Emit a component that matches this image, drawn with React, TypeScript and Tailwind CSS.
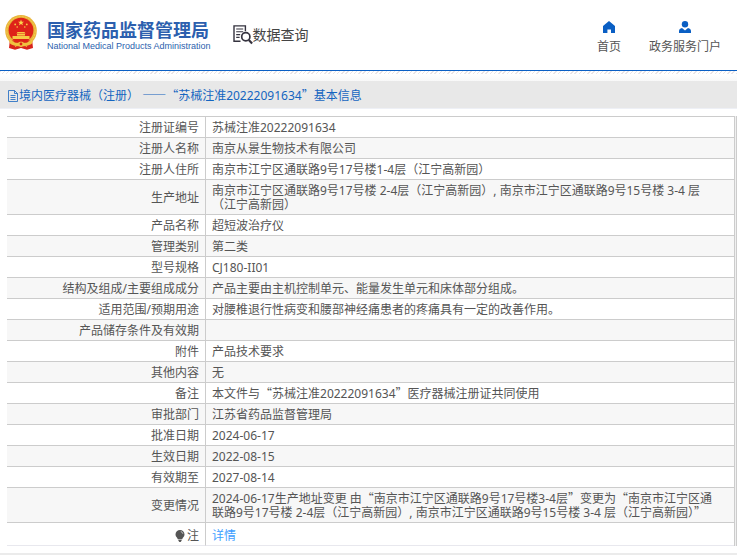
import React from 'react';

type Row = {
  label: string;
  value: string;
};

const rows: Row[] = [
  { label: '注册证编号', value: '苏械注准20222091634' },
  { label: '注册人名称', value: '南京从景生物技术有限公司' },
  { label: '注册人住所', value: '南京市江宁区通联路9号17号楼1-4层（江宁高新园）' },
  {
    label: '生产地址',
    value: '南京市江宁区通联路9号17号楼 2-4层（江宁高新园）, 南京市江宁区通联路9号15号楼 3-4 层（江宁高新园）',
  },
  { label: '产品名称', value: '超短波治疗仪' },
  { label: '管理类别', value: '第二类' },
  { label: '型号规格', value: 'CJ180-II01' },
  { label: '结构及组成/主要组成成分', value: '产品主要由主机控制单元、能量发生单元和床体部分组成。' },
  { label: '适用范围/预期用途', value: '对腰椎退行性病变和腰部神经痛患者的疼痛具有一定的改善作用。' },
  { label: '产品储存条件及有效期', value: '' },
  { label: '附件', value: '产品技术要求' },
  { label: '其他内容', value: '无' },
  { label: '备注', value: '本文件与“苏械注准20222091634”医疗器械注册证共同使用' },
  { label: '审批部门', value: '江苏省药品监督管理局' },
  { label: '批准日期', value: '2024-06-17' },
  { label: '生效日期', value: '2022-08-15' },
  { label: '有效期至', value: '2027-08-14' },
  {
    label: '变更情况',
    value:
      '2024-06-17生产地址变更 由“南京市江宁区通联路9号17号楼3-4层”变更为“南京市江宁区通联路9号17号楼 2-4层（江宁高新园）, 南京市江宁区通联路9号15号楼 3-4 层（江宁高新园）”',
  },
];

// Chinese quotes and dashes need the CJK face to be full width
function CnText({ text }: { text: string }) {
  return (
    <>
      {text.split(/([“”—]+)/).map((part, i) =>
        /[“”—]/.test(part) ? (
          <span key={i} lang="zh-CN" className="font-['Noto_Sans_CJK_SC',sans-serif] leading-none">
            {part}
          </span>
        ) : (
          part
        )
      )}
    </>
  );
}

function Emblem() {
  return (
    <svg viewBox="0 0 32 35" className="h-[35px] w-8 shrink-0" aria-hidden="true">
      <path d="M5 24 L4 33 L10 34.8 L16 33 L22 34.8 L28 33 L27 24 Z" fill="#d8231c" />
      <circle cx="16" cy="15.8" r="15.8" fill="#e9b53a" />
      <circle cx="16" cy="15.8" r="14.2" fill="none" stroke="#f4cd58" strokeWidth="1" strokeDasharray="2 1.2" />
      <circle cx="16" cy="15.2" r="12.4" fill="#de2219" />
      <path d="M16 4.6l.8 2.1h2.2l-1.7 1.4.6 2.2-1.9-1.3-1.9 1.3.6-2.2-1.7-1.4h2.2z" fill="#fbd84b" />
      <g fill="#f6cb45">
        <circle cx="10.2" cy="9.4" r="0.9" />
        <circle cx="21.8" cy="9.4" r="0.9" />
        <circle cx="12.2" cy="12" r="0.8" />
        <circle cx="19.8" cy="12" r="0.8" />
        <path d="M12.5 17h7l1 1.5h-9z" />
        <path d="M12 19h8v1.6h-8z" />
        <path d="M7.5 21h17v3h-17z" />
      </g>
      <path d="M7 25.3h18l-3 2.4H10z" fill="#de2219" />
      <path
        d="M4 24.5c3 3 6 3.8 9 3.4 1-1.6 5-1.6 6 0 3 .4 6-.4 9-3.4l-1 4c-3 2.4-6 2.4-8 1.6-1 1.8-5 1.8-6 0-2 .8-5 .8-8-1.6z"
        fill="#f0c23f"
      />
      <path d="M10 31.5l3-1.5 3 1.6 3-1.6 3 1.5" fill="none" stroke="#f0c23f" strokeWidth="1" />
      <circle cx="16" cy="29" r="1.4" fill="#de2219" />
    </svg>
  );
}

function SearchDocIcon() {
  return (
    <svg viewBox="0 0 20 20" className="h-5 w-5 shrink-0" fill="none" stroke="#35333f" aria-hidden="true">
      <path d="M7.5 16.3H1V.9h11.4v5.4" strokeWidth="1.4" />
      <path d="M3.2 4h7M3.2 6.8h7M3.2 9.6h4M3.2 12.4h3.4" strokeWidth="1.1" />
      <circle cx="12.8" cy="11.8" r="4.1" strokeWidth="1.7" />
      <path d="M15.8 15l3.3 3.6" strokeWidth="2.2" />
    </svg>
  );
}

function HomeIcon() {
  return (
    <svg viewBox="0 0 14 12" className="h-3 w-3.5" fill="#0a5fc4" aria-hidden="true">
      <path d="M7 0l6 5v7H9V8.5H5.400V12H1V5z" />
    </svg>
  );
}

function UserIcon() {
  return (
    <svg viewBox="0 0 12 12" className="h-3 w-3" fill="#0a5fc4" aria-hidden="true">
      <circle cx="6" cy="3.2" r="3.2" />
      <path d="M0 12v-2C0 8.2 1.2 7.3 3 6.9L6 9.6l3-2.7c1.8.4 3 1.3 3 3.1v2z" />
    </svg>
  );
}

function DocIcon() {
  return (
    <svg viewBox="0 0 11 12" className="h-3 w-[11px] shrink-0" fill="none" stroke="#1565c0" aria-hidden="true">
      <path d="M.5.5h6l3 3v8h-9zM6.5.5v3h3M2.5 5.5h5M2.5 7.5h5M2.5 9.5h5" strokeWidth="0.8" />
    </svg>
  );
}

function BulbIcon() {
  return (
    <svg viewBox="0 0 10 12" className="h-3 w-2.5" aria-hidden="true">
      <path d="M5 0a4.5 4.5 0 0 1 4.5 4.5c0 2.2-1.8 3-2.3 4.8H2.8C2.3 7.5 0.5 6.7 0.5 4.5A4.5 4.5 0 0 1 5 0z" fill="#555" />
      <path d="M3.4 9.8h3.2v1L5.6 12H4.4l-1-1.2z" fill="#555" />
      <path d="M5.8 1.7c1.2.2 1.8.9 2 2" stroke="#fff" strokeWidth="0.7" fill="none" />
    </svg>
  );
}

export default function App() {
  return (
    <div className="bg-white font-['Noto_Sans','Noto_Sans_CJK_SC',sans-serif] text-xs text-[#555]">
      <header className="flex h-[71px] items-start justify-between border-b border-[#0a5fc4] pl-[5px] pr-4">
        <div className="flex items-start">
          <a href="#" className="flex items-start gap-[10px] pt-[15px]">
            <Emblem />
            <span className="flex flex-col pt-1 text-[#2c5fae]">
              <span className="font-['Noto_Sans_CJK_SC',sans-serif] text-[18px] font-bold leading-5">国家药品监督管理局</span>
              <span className="font-['Liberation_Sans',sans-serif] text-[9px] leading-[14px] whitespace-nowrap">
                National Medical Products Administration
              </span>
            </span>
          </a>
          <div className="ml-[22px] flex items-center pt-[25px]">
            <SearchDocIcon />
            <span className="text-sm leading-5 text-[#444]">数据查询</span>
          </div>
        </div>
        <nav className="flex gap-7 pt-[21px] leading-[14px]">
          <a href="#" className="flex flex-col items-center gap-[7px]">
            <HomeIcon />
            首页
          </a>
          <a href="#" className="flex flex-col items-center gap-[7px]">
            <UserIcon />
            政务服务门户
          </a>
        </nav>
      </header>

      <div className="h-[3px] bg-[repeating-linear-gradient(135deg,#e9e4e6_0px,#e9e4e6_1px,#ffffff_1px,#ffffff_3px)]" />
      <div className="h-[7px] bg-linear-to-b from-white to-[#f8f8f8]" />

      <h1 className="flex h-7 items-center border-b border-[#eef0f6] bg-[#e8e8e8] pl-2 pt-[2px] leading-[14px] text-[#1565c0]">
        <DocIcon />
        <span>
          <CnText text="境内医疗器械（注册） ——“苏械注准20222091634”基本信息" />
        </span>
      </h1>

      <div className="ml-[7px] mt-[7px] border-r border-[#ccc] bg-[#f0f0f0] pr-px">
        <table className="w-full border-separate border-spacing-0 border-r border-t border-[#ccc] bg-white leading-[14px]">
          <tbody>
            {rows.map((row) => (
              <tr key={row.label} className="even:bg-[#f7f7f7]">
                <th
                  scope="row"
                  className="w-[199px] border-b border-r border-[#ccc] pb-[2px] pr-[6px] pt-1 text-right align-middle font-normal"
                >
                  {row.label}
                </th>
                <td className="border-b border-[#ccc] pb-[2px] pl-[6px] pr-3 pt-1 align-middle">
                  <CnText text={row.value} />
                </td>
              </tr>
            ))}
            <tr>
              <th scope="row" className="border-b border-r border-b-[#e8e8ee] border-r-[#ccc] pb-[2px] pr-[6px] pt-[6px] font-normal">
                <span className="flex items-center justify-end gap-[2px]">
                  <BulbIcon />注
                </span>
              </th>
              <td className="border-b border-[#e8e8ee] pb-[2px] pl-[6px] pr-3 pt-[6px]">
                <a href="#" className="text-[#409eff]">
                  详情
                </a>
              </td>
            </tr>
          </tbody>
        </table>
      </div>

      <footer className="mt-[7px] h-[2px] bg-[#ebebeb]" />
    </div>
  );
}
